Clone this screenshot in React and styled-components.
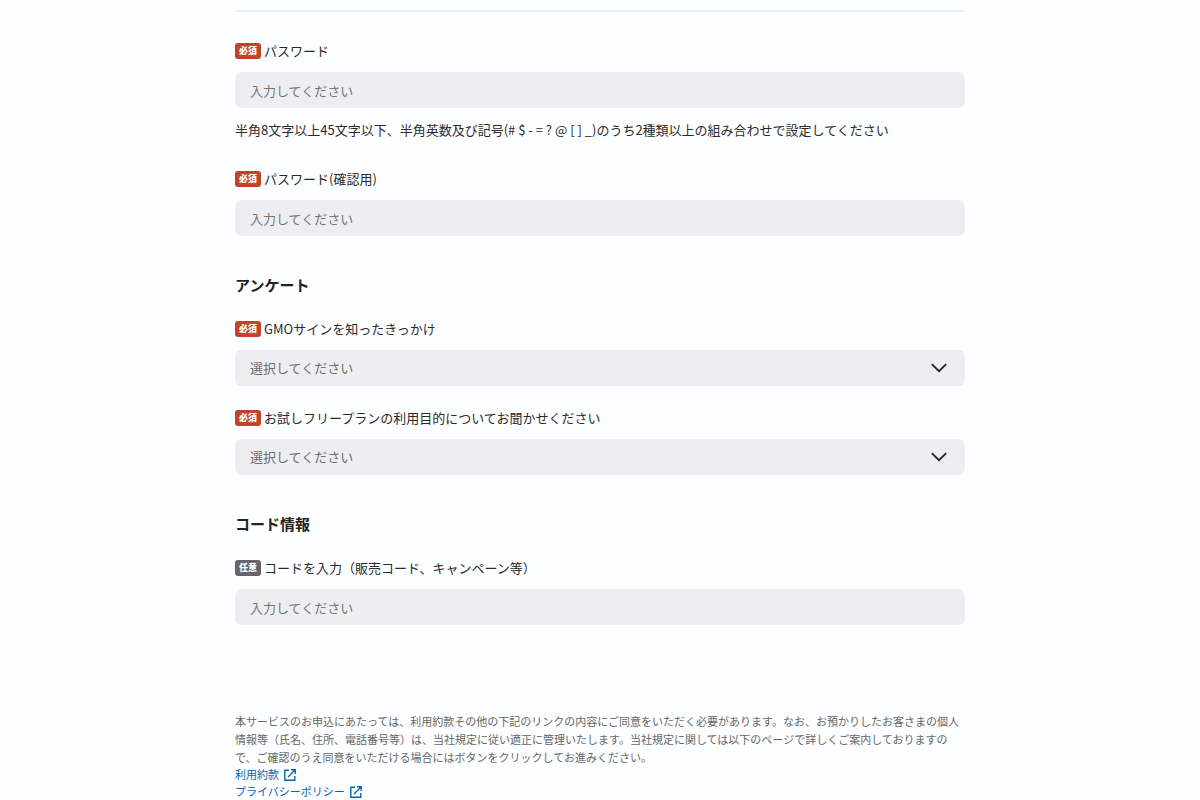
import React, { useState } from 'react'
import styled, { createGlobalStyle } from 'styled-components'

const GlobalStyle = createGlobalStyle`
    * {
        box-sizing: border-box;
    }
    body {
        margin: 0;
        background: #fdfeff;
        color: #2b2b2b;
        font-family: "Noto Sans CJK JP", sans-serif;
        font-size: 13px;
        line-height: 20px;
    }
    input, select {
        font: inherit;
    }
`

const PageWrapper = styled.main`
    max-width: 778px;
    margin: 0 auto;
    padding: 0 24px;
`

const Header = styled.header`
    height: 12px;
    border-bottom: 2px solid #e4eff8;
`

const Section = styled.section`
    display: flex;
    flex-direction: column;
    gap: ${({ $first }) => ($first ? '29px' : '22px')};
    padding-top: ${({ $first }) => ($first ? '29px' : '39px')};
`

const SectionTitle = styled.h2`
    margin: 0 0 2px;
    color: #222;
    font-size: 15px;
    line-height: 20px;
    font-weight: 700;
`

const FieldWrapper = styled.div`
    display: flex;
    flex-direction: column;
`

const FieldLabel = styled.label`
    display: flex;
    align-items: center;
    gap: 3px;
    margin-bottom: 11px;
`

const Badge = styled.span`
    padding: 0 4px;
    border-radius: 3px;
    background: ${({ $required }) => ($required ? '#c1432b' : '#666668')};
    color: #fff;
    font-size: 9px;
    line-height: 16px;
    font-weight: 900;
`

const TextInput = styled.input`
    width: 100%;
    height: 36px;
    padding: 0 15px;
    border: none;
    border-radius: 7px;
    background: #eeedf2;
    color: #222;

    &::placeholder {
        color: #757575;
        opacity: 1;
    }
`

const SelectWrapper = styled.div`
    position: relative;

    svg {
        position: absolute;
        top: 13px;
        right: 18px;
        pointer-events: none;
    }
`

const SelectInput = styled.select`
    display: block;
    width: 100%;
    height: 36px;
    padding: 0 40px 0 15px;
    border: none;
    border-radius: 7px;
    background: #eeedf2;
    color: #6d6d70;
    appearance: none;
`

const HelpText = styled.p`
    margin: 12px 0 0;
`

const Agreement = styled.div`
    margin-top: 87px;
    color: #666;
    font-size: 11px;
    line-height: 18px;

    p {
        margin: 0;
    }
`

const LinkList = styled.ul`
    display: flex;
    flex-direction: column;
    align-items: flex-start;
    margin: 0;
    padding: 0;
    list-style: none;
    line-height: 17px;
`

const PolicyLink = styled.a`
    display: flex;
    align-items: center;
    gap: 5px;
    color: #0b62ad;
    text-decoration: none;
`

const ChevronIcon = () => (
    <svg width="16" height="10" viewBox="0 0 16 10" fill="none" stroke="#222" strokeWidth="1.8" aria-hidden="true">
        <path d="M.8 1.2L8 8.2L15.2 1.2" />
    </svg>
)

const ExternalIcon = () => (
    <svg width="12" height="12" viewBox="0 0 12 12" fill="none" stroke="currentColor" strokeWidth="1.4" aria-hidden="true">
        <path d="M5 1.2H.8V11.2H10.8V7M7 .8H11.2V5M11 1L4 8" />
    </svg>
)

const Label = ({ htmlFor, required, children }) => (
    <FieldLabel htmlFor={htmlFor}>
        <Badge $required={required}>{required ? '必須' : '任意'}</Badge>
        {children}
    </FieldLabel>
)

const TextField = ({ id, label, type = 'text', required = false, help }) => {
    const [value, setValue] = useState('')

    return (
        <FieldWrapper>
            <Label htmlFor={id} required={required}>{label}</Label>
            <TextInput
                id={id}
                type={type}
                value={value}
                placeholder="入力してください"
                onChange={(e) => setValue(e.target.value)}
            />
            {help && <HelpText>{help}</HelpText>}
        </FieldWrapper>
    )
}

const SelectField = ({ id, label }) => (
    <FieldWrapper>
        <Label htmlFor={id} required>{label}</Label>
        <SelectWrapper>
            <SelectInput id={id} defaultValue="">
                <option value="">選択してください</option>
            </SelectInput>
            <ChevronIcon />
        </SelectWrapper>
    </FieldWrapper>
)

const links = ['利用約款', 'プライバシーポリシー']

const App = () => {
    return (
        <>
            <GlobalStyle />
            <PageWrapper lang="ja">
                <Header />
                <form>
                    <Section $first>
                        <TextField
                            id="password"
                            type="password"
                            label="パスワード"
                            required
                            help="半角8文字以上45文字以下、半角英数及び記号(# $ - = ? @ [ ] _)のうち2種類以上の組み合わせで設定してください"
                        />
                        <TextField id="password-confirm" type="password" label="パスワード(確認用)" required />
                    </Section>
                    <Section>
                        <SectionTitle>アンケート</SectionTitle>
                        <SelectField id="trigger" label="GMOサインを知ったきっかけ" />
                        <SelectField id="purpose" label="お試しフリープランの利用目的についてお聞かせください" />
                    </Section>
                    <Section>
                        <SectionTitle>コード情報</SectionTitle>
                        <TextField id="code" label="コードを入力（販売コード、キャンペーン等）" />
                    </Section>
                </form>
                <Agreement>
                    <p>
                        本サービスのお申込にあたっては、利用約款その他の下記のリンクの内容にご同意をいただく必要があります。なお、お預かりしたお客さまの個人情報等（氏名、住所、電話番号等）は、当社規定に従い適正に管理いたします。当社規定に関しては以下のページで詳しくご案内しておりますので、ご確認のうえ同意をいただける場合にはボタンをクリックしてお進みください。
                    </p>
                    <LinkList>
                        {links.map((text) => (
                            <li key={text}>
                                <PolicyLink href="#">{text}<ExternalIcon /></PolicyLink>
                            </li>
                        ))}
                    </LinkList>
                </Agreement>
            </PageWrapper>
        </>
    )
}

export default App
